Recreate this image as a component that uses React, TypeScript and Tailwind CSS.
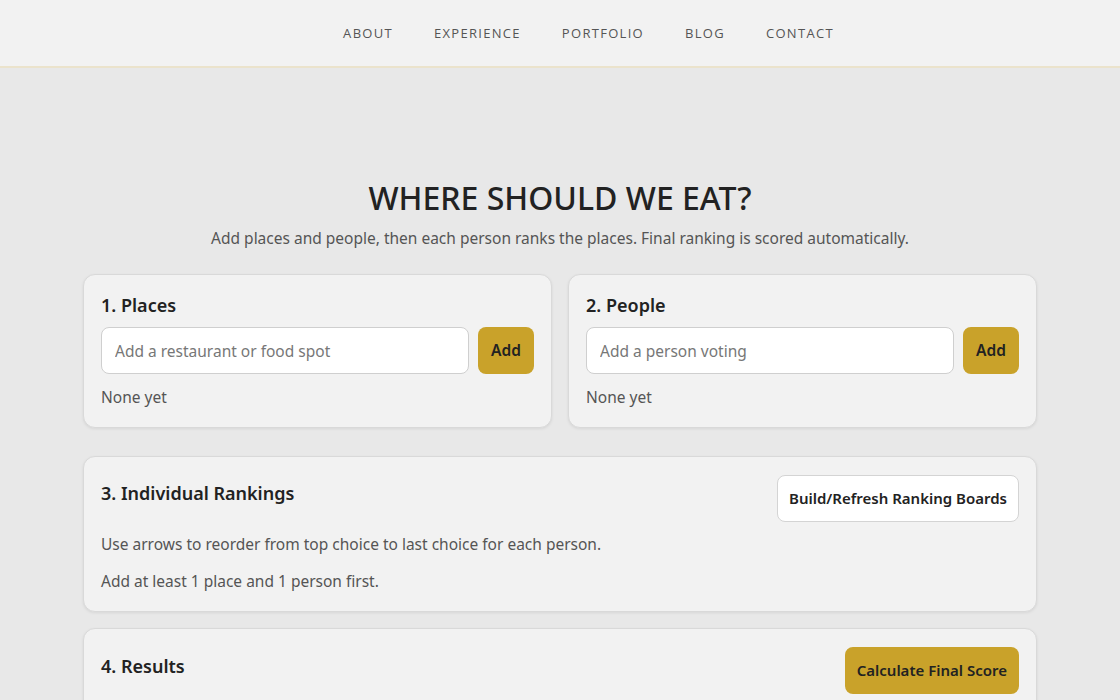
const navItems = ["ABOUT", "EXPERIENCE", "PORTFOLIO", "BLOG", "CONTACT"];

function Card({ children }: { children: React.ReactNode }) {
  return (
    <section className="rounded-[12px] border border-[#d9d9d9] bg-[#f2f2f2] px-[17px] pb-[19px] pt-[18px] shadow-[0_1px_3px_rgba(0,0,0,0.08)]">
      {children}
    </section>
  );
}

function AddCard({ title, placeholder }: { title: string; placeholder: string }) {
  return (
    <Card>
      <h2 className="text-[18px] font-semibold leading-[24px] text-[#222]">{title}</h2>
      <div className="mt-[10px] flex gap-[9px]">
        <input
          placeholder={placeholder}
          className="h-[47px] min-w-0 flex-1 rounded-[8px] border border-[#cfcfcf] bg-white px-[13px] text-[15.5px] text-[#222] outline-none placeholder:text-[#777]"
        />
        <button className="h-[47px] w-[56px] rounded-[8px] bg-[#c9a22a] text-[15.5px] font-semibold text-[#222]">
          Add
        </button>
      </div>
      <p className="mt-[12px] text-[15.5px] leading-[22px] text-[#555]">None yet</p>
    </Card>
  );
}

export default function App() {
  return (
    <div className="min-h-screen bg-[#e8e8e8] font-['Noto_Sans',sans-serif] text-[#222]">
      <header className="border-b-2 border-[#ebe3cc] bg-[#f2f2f2]">
        <nav className="flex h-[66px] items-center justify-center gap-[41px] pl-[57px] font-['Open_Sans',sans-serif] text-[13px] tracking-[1.3px] text-[#555]">
          {navItems.map((item) => (
            <a key={item} href="#" className="leading-none">
              {item}
            </a>
          ))}
        </nav>
      </header>

      <main className="mx-auto w-[954px] pt-[110px]">
        <h1 className="text-center text-[32px] font-medium leading-[40px] text-[#222]">WHERE SHOULD WE EAT?</h1>
        <p className="mt-[8px] text-center text-[15.5px] leading-[24px] text-[#555]">
          Add places and people, then each person ranks the places. Final ranking is scored automatically.
        </p>

        <div className="mt-[24px] grid grid-cols-2 gap-[16px]">
          <AddCard title="1. Places" placeholder="Add a restaurant or food spot" />
          <AddCard title="2. People" placeholder="Add a person voting" />
        </div>

        <div className="mt-[28px] flex flex-col gap-[16px]">
          <Card>
            <div className="flex items-start justify-between">
              <h2 className="mt-[6px] text-[18px] font-semibold leading-[24px] text-[#222]">3. Individual Rankings</h2>
              <button className="h-[47px] rounded-[8px] border border-[#d4d4d4] bg-white px-[11px] text-[15px] font-semibold text-[#222]">
                Build/Refresh Ranking Boards
              </button>
            </div>
            <p className="mt-[11px] text-[15.5px] leading-[22px] text-[#555]">
              Use arrows to reorder from top choice to last choice for each person.
            </p>
            <p className="mt-[15px] text-[15.5px] leading-[22px] text-[#555]">Add at least 1 place and 1 person first.</p>
          </Card>

          <Card>
            <div className="flex items-start justify-between">
              <h2 className="mt-[7px] text-[18px] font-semibold leading-[24px] text-[#222]">4. Results</h2>
              <button className="h-[47px] rounded-[8px] bg-[#c9a22a] px-[12px] text-[15px] font-semibold text-[#222]">
                Calculate Final Score
              </button>
            </div>
          </Card>
        </div>
      </main>
    </div>
  );
}
